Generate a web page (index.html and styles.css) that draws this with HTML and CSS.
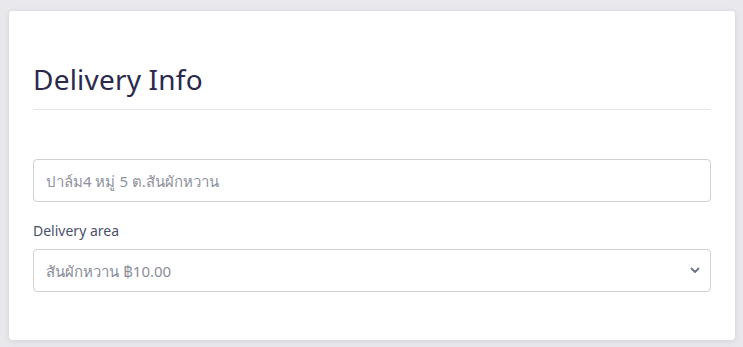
FILE: index.html
```html
<!DOCTYPE html>
<html lang="th">
<head>
    <meta charset="UTF-8">
    <meta name="viewport" content="width=device-width, initial-scale=1.0">
    <title>Delivery Info</title>
    <link rel="stylesheet" href="styles.css">
</head>
<body>
    <div class="card">
        <h2 class="card-title">Delivery Info</h2>
        <form class="delivery-form">
            <input class="form-control" type="text" placeholder="ปาล์ม4 หมู่ 5 ต.สันผักหวาน">
            <label class="form-label" for="area">Delivery area</label>
            <div class="select-wrap">
                <select class="form-control" id="area">
                    <option>สันผักหวาน ฿10.00</option>
                </select>
                <svg class="select-arrow" width="10" height="7" viewBox="0 0 10 7">
                    <path d="M1.5 1.5l3.5 3.5 3.5-3.5" fill="none" stroke="#6b7280" stroke-width="1.8" stroke-linecap="round" stroke-linejoin="round"/>
                </svg>
            </div>
        </form>
    </div>
</body>
</html>
```

FILE: styles.css
```css
body {
    margin: 0;
    padding: 11px 8px 7px 9px;
    background-color: #e8e8ed;
    font-family: "Noto Sans", Lato, sans-serif;
    color: #333;
}

.card {
    background-color: #fff;
    border-radius: 4px;
    box-shadow: 0 1px 6px rgba(0,0,0,0.1);
    padding: 48px 24px 48px 24px;
    height: 233px;
}

.card-title {
    margin: 0;
    font-size: 28px;
    font-weight: 400;
    letter-spacing: 0.2px;
    color: #2b2a4c;
    line-height: 40px;
    padding-bottom: 10px;
    border-bottom: 1px solid #e6e6ea;
}

.delivery-form {
    display: flex;
    flex-direction: column;
    margin-top: 49px;
}

.form-control {
    box-sizing: border-box;
    width: 100%;
    height: 43px;
    padding: 0 12px;
    border: 1px solid #cfd0d4;
    border-radius: 4px;
    font-family: inherit;
    font-size: 15px;
    color: #8a8d99;
    background-color: #fff;
    outline: none;
}

.form-control::placeholder {
    color: #8f929d;
}

.form-label {
    margin: 19px 0 9px;
    font-size: 14px;
    color: #4a5068;
}

.select-wrap {
    position: relative;
}

select.form-control {
    appearance: none;
    -webkit-appearance: none;
}

.select-arrow {
    position: absolute;
    right: 11px;
    top: 18px;
}
```
